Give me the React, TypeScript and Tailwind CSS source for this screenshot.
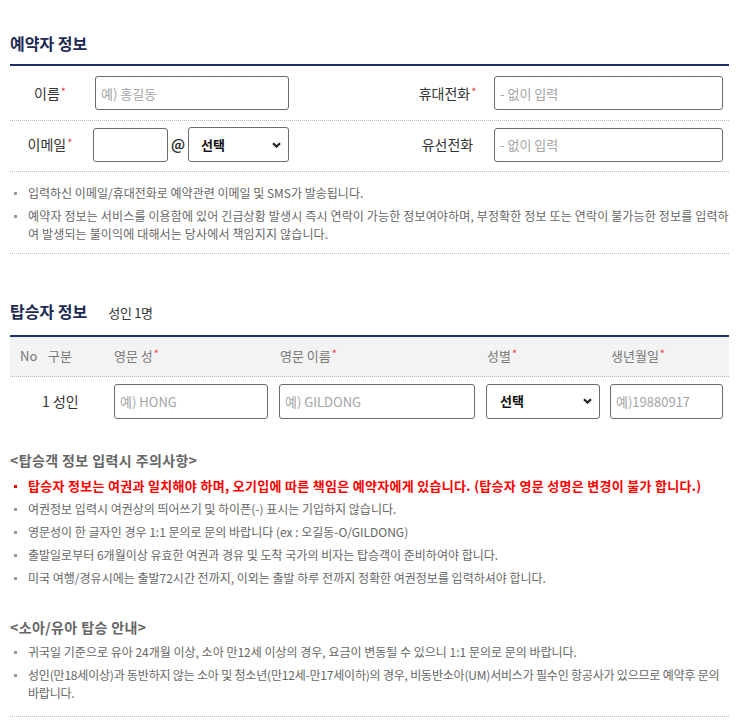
import React from "react";

const Req = () => (
  <span className="relative -top-[3px] ml-[1px] text-[11px] leading-[14px] text-[#ee3a4c]">*</span>
);

function Chevron() {
  return (
    <svg
      className="pointer-events-none absolute right-[8px] top-1/2 -translate-y-1/2"
      width="9"
      height="6"
      viewBox="0 0 9 6"
    >
      <path d="M1 1.2 L4.5 4.6 L8 1.2" fill="none" stroke="#222" strokeWidth="2.2" />
    </svg>
  );
}

function Select({ w, pl }: { w: string; pl: string }) {
  return (
    <div className={`relative h-[35px] ${w}`}>
      <select
        className={`h-full w-full appearance-none rounded-[3px] border border-[#6b6b6b] bg-white ${pl} text-[13px] font-bold text-[#111] outline-none`}
        defaultValue=""
      >
        <option value="">선택</option>
        <option value="M">남</option>
        <option value="F">여</option>
      </select>
      <Chevron />
    </div>
  );
}

const inputCls =
  "h-[34px] rounded-[3px] border border-[#6b6b6b] bg-white pl-[5px] text-[13px] text-[#333] outline-none placeholder:text-[#a3a3a3]";

type Item = { text: string; red?: boolean; track?: string };

function Bullets({ items }: { items: Item[] }) {
  return (
    <ul className="flex flex-col gap-[5px]">
      {items.map((it, i) => (
        <li key={i} className="flex">
          <span
            className={`ml-[4px] mr-[11px] mt-[8px] h-[3px] w-[3px] shrink-0 ${it.red ? "bg-[#ff0000]" : "bg-[#999]"}`}
          />
          <p
            className={
              it.red
                ? "text-[13px] font-bold leading-[18px] tracking-[0.3px] text-[#ff0000]"
                : `text-[12px] leading-[18px] text-[#666] ${it.track ?? "tracking-[0px]"}`
            }
          >
            {it.text}
          </p>
        </li>
      ))}
    </ul>
  );
}

export default function App() {
  return (
    <div className="min-h-[727px] w-[748px] bg-white font-['Noto_Sans_CJK_KR',sans-serif]">
      <div className="ml-[10px] w-[719px]">
        {/* 예약자 정보 */}
        <h2 className="pb-[10px] pt-[33px] text-[16px] font-bold leading-[21px] text-[#1c2a54]">
          예약자 정보
        </h2>
        <div className="border-t-2 border-[#1d2f6a]">
          <div className="flex h-[55px] items-center border-b border-dotted border-[#bbb]">
            <div className="w-[80px] text-center text-[14px] text-[#333]">
              이름<Req />
            </div>
            <div className="w-[315px]">
              <input className={`${inputCls} ml-[5px] w-[194px]`} placeholder="예) 홍길동" />
            </div>
            <div className="w-[85px] text-center text-[14px] text-[#333]">
              휴대전화<Req />
            </div>
            <input className={`${inputCls} ml-[4px] w-[229px]`} placeholder="- 없이 입력" />
          </div>
          <div className="flex items-center border-b border-dotted border-[#bbb] pb-[9px] pt-[6px]">
            <div className="w-[80px] text-center text-[14px] text-[#333]">
              이메일<Req />
            </div>
            <div className="flex w-[315px] items-center">
              <input className={`${inputCls} ml-[3px] w-[75px]`} />
              <span className="w-[20px] text-center text-[14px] font-bold text-[#333]">@</span>
              <Select w="w-[101px]" pl="pl-[12px]" />
            </div>
            <div className="w-[85px] text-center text-[14px] text-[#333]">유선전화</div>
            <input className={`${inputCls} ml-[4px] w-[229px]`} placeholder="- 없이 입력" />
          </div>
        </div>
        <div className="border-b border-dotted border-[#bbb] pb-[10px] pt-[12px]">
          <Bullets
            items={[
              { text: "입력하신 이메일/휴대전화로 예약관련 이메일 및 SMS가 발송됩니다." },
              {
                text: "예약자 정보는 서비스를 이용함에 있어 긴급상황 발생시 즉시 연락이 가능한 정보여야하며, 부정확한 정보 또는 연락이 불가능한 정보를 입력하여 발생되는 불이익에 대해서는 당사에서 책임지지 않습니다.",
                track: "tracking-[0.15px]",
              },
            ]}
          />
        </div>

        {/* 탑승자 정보 */}
        <div className="flex items-baseline pb-[12px] pt-[47px]">
          <h2 className="text-[16px] font-bold leading-[21px] text-[#1c2a54]">탑승자 정보</h2>
          <span className="ml-[21px] text-[13px] tracking-[-0.3px] text-[#333]">성인 1명</span>
        </div>
        <div className="border-t-2 border-[#1d2f6a]">
          <div className="grid h-[40px] grid-cols-[28px_66px_166px_207px_124px_118px] items-center border-b border-dotted border-[#bbb] bg-[#f3f3f3] pl-[10px] text-[13px] text-[#777]">
            <span>No</span>
            <span>구분</span>
            <span>
              영문 성<Req />
            </span>
            <span>
              영문 이름<Req />
            </span>
            <span>
              성별<Req />
            </span>
            <span>
              생년월일<Req />
            </span>
          </div>
          <div className="grid grid-cols-[28px_66px_166px_207px_124px_118px] items-center pb-[11px] pl-[10px] pt-[7px]">
            <span className="col-span-2 pl-[22px] text-[14px] text-[#333]">1 성인</span>
            <input className={`${inputCls} h-[35px] w-[154px]`} placeholder="예) HONG" />
            <input className={`${inputCls} -ml-[1px] h-[35px] w-[196px]`} placeholder="예) GILDONG" />
            <div className="-ml-[1px]">
              <Select w="w-[114px]" pl="pl-[13px]" />
            </div>
            <input className={`${inputCls} -ml-[1px] h-[35px] w-[113px]`} placeholder="예)19880917" />
          </div>
        </div>

        <div className="pt-[20px]">
          <h3 className="text-[14px] font-bold leading-[20px] tracking-[0.4px] text-[#666]">
            &lt;탑승객 정보 입력시 주의사항&gt;
          </h3>
          <div className="mt-[7px]">
            <Bullets
              items={[
                {
                  text: "탑승자 정보는 여권과 일치해야 하며, 오기입에 따른 책임은 예약자에게 있습니다. (탑승자 영문 성명은 변경이 불가 합니다.)",
                  red: true,
                },
                { text: "여권정보 입력시 여권상의 띄어쓰기 및 하이픈(-) 표시는 기입하지 않습니다." },
                { text: "영문성이 한 글자인 경우 1:1 문의로 문의 바랍니다 (ex : 오길동-O/GILDONG)" },
                { text: "출발일로부터 6개월이상 유효한 여권과 경유 및 도착 국가의 비자는 탑승객이 준비하여야 합니다." },
                { text: "미국 여행/경유시에는 출발72시간 전까지, 이외는 출발 하루 전까지 정확한 여권정보를 입력하셔야 합니다." },
              ]}
            />
          </div>
        </div>

        <div className="border-b border-dotted border-[#bbb] pb-[14px] pt-[30px]">
          <h3 className="text-[14px] font-bold leading-[20px] tracking-[0.4px] text-[#666]">
            &lt;소아/유아 탑승 안내&gt;
          </h3>
          <div className="mt-[6px]">
            <Bullets
              items={[
                { text: "귀국일 기준으로 유아 24개월 이상, 소아 만12세 이상의 경우, 요금이 변동될 수 있으니 1:1 문의로 문의 바랍니다." },
                {
                  text: "성인(만18세이상)과 동반하지 않는 소아 및 청소년(만12세-만17세이하)의 경우, 비동반소아(UM)서비스가 필수인 항공사가 있으므로 예약후 문의 바랍니다.",
                  track: "tracking-[-0.2px]",
                },
              ]}
            />
          </div>
        </div>
      </div>
    </div>
  );
}
